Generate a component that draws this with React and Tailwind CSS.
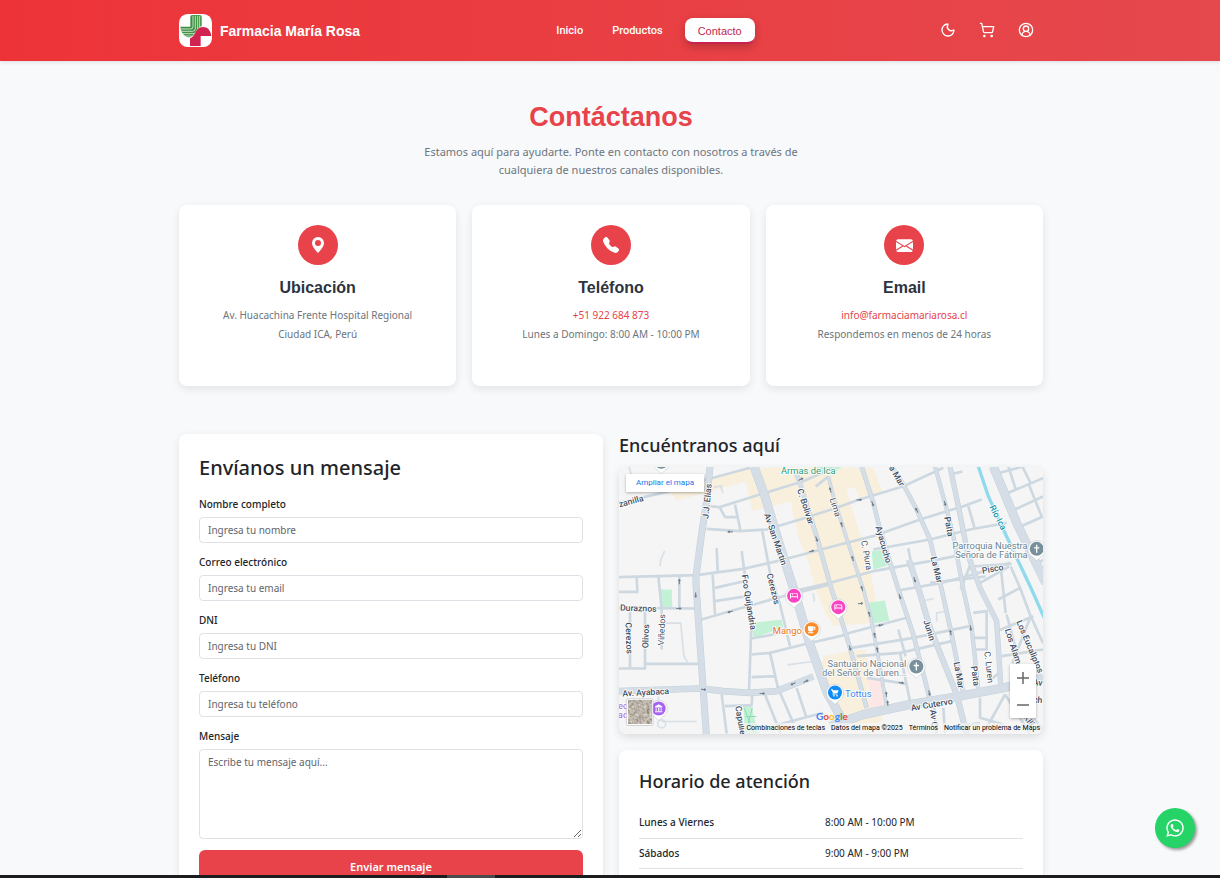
import React from "react";
import { Moon, ShoppingCart, CircleUserRound } from "lucide-react";
import { BsGeoAltFill, BsTelephoneFill, BsEnvelopeFill } from "react-icons/bs";
import { FaWhatsapp } from "react-icons/fa";

function Logo() {
  return (
    <svg viewBox="0 0 99 99" className="size-[33px] shrink-0" aria-hidden="true">
      <rect width="99" height="99" rx="26" fill="#fff" />
      <path d="M34 9q0-6 6-6h22q6 0 6 6v27C50 42 52 60 33 70 18 70 6 58 4 38h30z" fill="#3f9142" />
      <g fill="none" stroke="#e6f3e4" strokeWidth="2.4">
        <path d="M42 5v33q0 7-7 7H4M49 5v38q0 9-9 9H6M56 5v37q0 17-16 17H9M62 5v34M38 66H15" />
      </g>
      <path d="M33 96V73c16-4 15-34 38-34 15 0 24 10 26 27H65v30z" fill="#d1234f" />
    </svg>
  );
}

const minorRoads = [
  "M0 109L153 74L263 39L393 4",
  "M273 119L300 122L423 84L553 44L640 5",
  "M263 187L363 194L443 189L543 159L653 124L713 102L853 59L973 4",
  "M0 332L233 326L373 307L503 277L663 234L763 209L903 159L1033 119L1088 99",
  "M763 249L933 219L1053 189L1163 169",
  "M520 375L633 349L763 314L933 284L1043 262",
  "M838 372L963 350L1060 325L1173 289",
  "M248 459L333 434L493 389L633 354",
  "M398 564L453 559L553 534L663 509L693 499L863 454",
  "M698 544L883 514L1053 479",
  "M713 569L843 559L998 524",
  "M0 424L228 426M0 606H78V426M78 592H240M33 426V606",
  "M118 330L128 426V549M53 332L55 376H0M181 330V426",
  "M368 254L378 329L398 454L390 674M293 244L296 314",
  "M430 194L453 319L483 414L513 539M348 114L365 194M303 124L318 152H358",
  "M281 324L288 444M288 364L372 345M288 404L383 389",
  "M453 559L478 669M398 632L468 629M398 516L493 498",
  "M308 684L323 801M318 719L398 716L400 680M438 684L485 801M484 680L523 770M533 665L563 755M470 776L613 739",
  "M1048 119L1068 189M1003 22L1030 15M1073 355L1170 300M1060 300L1178 292",
  "M1143 19L1213 0M1168 79L1272 35M1185 130L1272 90M1205 180L1272 150M1168 0L1190 68M1210 0L1235 50M1230 55L1268 150M1258 290L1272 280",
  "M1138 399L1203 364L1233 444L1272 530M1133 494L1243 449M1203 364L1175 300M1145 299L1160 440",
  "M1063 439L1103 434V549H1063M1063 514H1100M1148 569L1272 549M1163 444L1203 594M1235 450L1180 590",
  "M973 724L978 801M1083 694V754L1153 774M1158 684L1103 784M1158 684L1233 801M1190 690L1272 790M1083 770L1043 775",
  "M933 349L1100 330M868 245L888 354M1115 640L1145 616M1025 369L1060 280",
  "M843 559L875 714M838 489L860 570M745 634L863 652M953 804L945 720",
  "M628 30L590 60",
];

const arterials = [
  ["M273 0L262 110L246 215L231 330L231 354L245 560L262 804", 21],
  ["M405 0L438 90L480 230L525 370L573 534L625 680L675 770", 27],
  ["M530 20L540 40L593 210L638 370L653 414L693 544L743 724", 14],
  ["M628 30L643 89L668 169L703 279L733 369L753 444L773 544L803 720", 11],
  ["M728 0L763 109L783 189L838 369L883 504L933 700", 14],
  ["M818 0L853 54L893 129L933 219L968 369L998 504L1033 680", 14],
  ["M948 0L978 109L1003 209L1033 369L1058 484L1078 670", 13],
  ["M993 0L1018 119L1048 269L1083 364L1133 464L1145 654", 16],
  ["M870 280L898 364L933 484L1013 684L1043 804", 18],
  ["M1123 0L1193 169L1280 350", 27],
  ["M0 674L243 666L313 674L393 679L473 674L583 630", 20],
  ["M633 780L733 744L873 714L1023 689L1153 664L1272 634", 27],
];

const streetNames = [
  ["zanilla", 36, 104, -15],
  ["J.J. Elias", 264, 104, -84],
  ["Av San Martin", 470, 218, 71],
  ["C. Bolivar", 560, 120, 72],
  ["Lima", 649, 122, 72, 1],
  ["a Mar", 834, 28, 60],
  ["Ayacucho", 794, 234, 74],
  ["C. Piura", 743, 266, 80, 1],
  ["La Mar", 953, 310, 76],
  ["Paita", 990, 180, 80],
  ["Pisco", 1121, 307, -10],
  ["Fco Quijandria", 390, 407, 81],
  ["Cerezos", 463, 367, 76],
  ["Duraznos", 58, 425, 2],
  ["Cerezos", 30, 515, 88],
  ["Olivos", 80, 509, -88],
  ["Viñedos", 128, 490, -88, 1],
  ["Av. Ayabaca", 80, 677, -3],
  ["Capulíes", 366, 768, 80],
  ["Junin", 931, 491, 72],
  ["La Mar", 1020, 626, 80],
  ["Paita", 1069, 628, 82],
  ["C. Luren", 1110, 602, 84, 1],
  ["Los Alamos", 1187, 552, 72],
  ["Los Eucaliptos", 1233, 540, 67],
  ["Av Cutervo", 938, 714, -10],
  ["Av C", 945, 756, 84],
  ["Av", 1256, 648, 5],
  ["ch", 1256, 700, 5],
  ["Kill", 1230, 762, 55],
];

function Pin({ x, y, color, children }) {
  return (
    <g transform={`translate(${x} ${y})`}>
      <path d="M0 36l-11-11a26 26 0 1 1 22 0z" fill="#fff" stroke="#b9c0c6" strokeWidth="1.5" />
      <circle r="21" fill={color} />
      <g fill="#fff" stroke="none">{children}</g>
    </g>
  );
}

const bed = <path d="M-12-8h3v9h18v-3q0-4-4-4h-9v5h-2v-5h-3v-2h17q4 0 4 5v11h-3v-4h-18v4h-3z" />;
const cross = <path d="M-2-12h4v7h6v4h-6v13h-4v-13h-6v-4h6z" />;
const arrows = [
  [333, 196, 180], [181, 345, -90], [593, 218, 70], [578, 254, -15], [546, 38, -25], [634, 70, -105],
  [668, 174, -105], [721, 100, 0], [761, 112, 70], [893, 131, -115], [978, 111, 75], [701, 276, -105],
  [887, 340, 75], [230, 386, 90], [333, 436, 165], [180, 426, 0], [254, 669, 5], [430, 681, 0],
  [522, 652, 155], [561, 644, -25], [725, 411, -5], [729, 366, -105], [843, 391, 75], [751, 443, -105],
  [785, 476, 170], [767, 506, -100], [775, 550, -100], [693, 545, 75], [995, 498, -100], [1055, 485, 85],
  [847, 649, 5], [802, 683, -95], [806, 710, -95], [931, 680, 80],
];

function StreetMap() {
  return (
    <svg viewBox="0 0 1272 804" preserveAspectRatio="xMidYMid slice" className="block size-full" role="img" aria-label="Mapa de Ica" fontFamily="Roboto, sans-serif">
      <defs>
        <filter id="ground" x="0" y="0" width="100%" height="100%">
          <feTurbulence type="fractalNoise" baseFrequency="0.12" numOctaves="4" seed="4" />
          <feColorMatrix values="0.7 0.3 0 0 0  0.65 0.3 0 0 -0.02  0.6 0.3 0 0 -0.05  0 0 0 0 1" />
        </filter>
      </defs>
      <rect width="1272" height="804" fill="#f5f5f5" />
      <g fill="#f8efdc">
        <path d="M155 76L263 40L400 4H763L790 75L720 95L708 60L682 68L700 130L745 270L765 369L780 460L640 470L620 440L590 369L570 290L540 220L515 105L400 133L380 45L273 75L173 102Z" />
        <path d="M633 400L720 390L750 470L640 478ZM613 570L680 555L740 550L760 640L745 660L755 720L790 725V765L640 790L650 730L600 640Z" />
      </g>
      <path d="M748 640h44l9 75-48 10z" fill="#fde6e6" />
      <g fill="#c3f1d5">
        <path d="M758 254L803 249L818 293L763 309ZM748 409L798 402L811 462L761 472ZM398 469L488 459L493 484L403 514ZM121 369H158L160 424H123ZM373 719H398L418 804H378ZM590 0h80l-20 14h-50z" />
      </g>
      <g fill="none" strokeLinejoin="round">
        <g stroke="#cdd8e0" strokeWidth="8">
          {minorRoads.map((d) => <path key={d} d={d} />)}
        </g>
        <g stroke="#d8e0e7" strokeWidth="5">
          <path d="M123 299L125 280L137 253M138 470H185L195 570L208 590M305 60L312 80M505 595L580 585M918 402L945 396M953 465V440L975 435M310 58L285 62M583 380L586 405M30 0L40 35" />
          <path d="M118 745V690M128 765L233 765" />
          <circle cx="128" cy="772" r="12" />
        </g>
        <path d="M375 724l30 76M400 724l-20 76M380 750h32M385 775h32" stroke="#8fdcb2" strokeWidth="3" />
        {arterials.map(([d, w]) => <path key={d} d={d} stroke="#c3d0da" strokeWidth={w} />)}
        {arterials.map(([d, w]) => <path key={d} d={d} stroke="#d5dee6" strokeWidth={w - 3} />)}
        <path d="M1078 0L1108 89L1153 189L1238 369L1276 455" stroke="#90daee" strokeWidth="10" />
      </g>
      <g fill="#6b7885" stroke="#6b7885" strokeWidth="2">
        {arrows.map(([x, y, a]) => (
          <path key={`${x}-${y}`} transform={`translate(${x} ${y}) rotate(${a})`} d="M-8 0H2V-3L7 0L2 3V0z" />
        ))}
      </g>
      <g fill="#3f4f63" stroke="#fff" strokeWidth="5" paintOrder="stroke" strokeLinejoin="round" fontSize="26" textAnchor="middle">
        {streetNames.map(([name, x, y, a, light]) => (
          <text key={name + x} transform={`translate(${x} ${y}) rotate(${a})`} dy="9" fontWeight={light ? 400 : 500}>{name}</text>
        ))}
        <text transform="translate(1137 153) rotate(63)" dy="9" fontWeight="500" fill="#0f97ac">Río Ica</text>
        <g fontWeight="400" fontSize="28">
          <text x="568" y="22" fill="#2d9c72">Armas de Ica</text>
          <text x="1226" y="246" textAnchor="end" fill="#6b8290">Parroquia Nuestra</text>
          <text x="1226" y="274" textAnchor="end" fill="#6b8290">Señora de Fátima</text>
          <text x="862" y="601" textAnchor="end" fill="#6b8290">Santuario Nacional</text>
          <text x="862" y="629" textAnchor="end" fill="#6b8290">del Señor de Luren...</text>
          <text x="505" y="503" fill="#ea7423">Mango</text>
          <text x="718" y="692" fill="#3b86f0">Tottus</text>
          <text x="12" y="728" fill="#a35be8">ec</text>
          <text x="12" y="754" fill="#a35be8">ad</text>
        </g>
      </g>
      <Pin x={127} y={-14} color="#78909c" />
      <Pin x={525} y={388} color="#fb44c4">{bed}</Pin>
      <Pin x={658} y={422} color="#fb44c4">{bed}</Pin>
      <Pin x={578} y={488} color="#fb8c2b"><path d="M-11-9h16v2h6v9h-6q-1 5-5 5h-6q-5 0-5-5zM5-4v4h3v-4zM-11 9h16v3h-16z" /></Pin>
      <Pin x={648} y={678} color="#0d8df5"><path d="M-12-10h5l1 3h17l-4 10h-11l-1 2h12v2h-15l2-5-4-9h-2z" /><circle cx="-3" cy="10" r="2.4" /><circle cx="6" cy="10" r="2.4" /></Pin>
      <Pin x={119} y={726} color="#a762f2"><path d="M0-13L11-6v3h-22v-3zM-9-1h3v8h-3zM-2-1h4v8h-4zM6-1h3v8h-3zM-11 8h22v3h-22z" /></Pin>
      <Pin x={1253} y={247} color="#78909c">{cross}</Pin>
      <Pin x={892} y={600} color="#78909c">{cross}</Pin>
      <rect x="22" y="697" width="80" height="80" rx="5" fill="#fff" stroke="#b9bdc2" strokeWidth="2" />
      <rect x="27" y="702" width="70" height="70" filter="url(#ground)" />
    </svg>
  );
}

function InfoCard({ icon, title, children }) {
  return (
    <article className="flex flex-col items-center rounded-lg bg-white px-4 pt-5 pb-[42px] text-center shadow-[0_3px_9px_rgba(0,0,0,0.09)]">
      <div className="flex size-10 items-center justify-center rounded-full bg-[#e8434a] text-white">{icon}</div>
      <h3 className="mt-[13px] font-['Liberation_Sans',sans-serif] text-base leading-5 font-bold text-[#2b3440]">{title}</h3>
      <div className="mt-2 flex flex-col text-[10px] leading-[19px] text-[#6c757d]">{children}</div>
    </article>
  );
}

const fields = [
  { id: "nombre", label: "Nombre completo", type: "text", hint: "Ingresa tu nombre" },
  { id: "correo", label: "Correo electrónico", type: "email", hint: "Ingresa tu email" },
  { id: "dni", label: "DNI", type: "text", hint: "Ingresa tu DNI" },
  { id: "telefono", label: "Teléfono", type: "tel", hint: "Ingresa tu teléfono" },
];

const inputStyle = "block w-full rounded border border-[#dee2e6] bg-white px-2 text-[10px] text-[#212529] placeholder:text-[#5f666d]";
const labelStyle = "mb-1 block text-[10px] leading-[18px] font-medium text-[#212529]";

function MessageForm() {
  return (
    <form className="rounded-lg bg-white p-5 shadow-[0_3px_9px_rgba(0,0,0,0.09)]" onSubmit={(e) => e.preventDefault()}>
      <h2 className="mb-3.5 text-xl leading-[27px] font-medium">Envíanos un mensaje</h2>
      {fields.map((f) => (
        <div key={f.id} className="mb-2.5">
          <label htmlFor={f.id} className={labelStyle}>{f.label}</label>
          <input id={f.id} type={f.type} placeholder={f.hint} className={`${inputStyle} h-[26px]`} />
        </div>
      ))}
      <label htmlFor="mensaje" className={labelStyle}>Mensaje</label>
      <textarea id="mensaje" placeholder="Escribe tu mensaje aquí..." className={`${inputStyle} mb-[11px] h-[90px] resize-y py-1 leading-4`} />
      <button type="submit" className="h-[34px] w-full rounded-md bg-[#e8434a] text-[11px] font-semibold text-white">Enviar mensaje</button>
    </form>
  );
}

const hours = [
  ["Lunes a Viernes", "8:00 AM - 10:00 PM"],
  ["Sábados", "9:00 AM - 9:00 PM"],
  ["Domingos", "9:00 AM - 8:00 PM"],
];

function MapPanel() {
  return (
    <div className="relative h-[267px] overflow-hidden rounded-lg shadow-[0_3px_9px_rgba(0,0,0,0.12)]">
      <StreetMap />
      <a href="#mapa" className="absolute top-[7px] left-[7px] rounded-[1px] bg-white px-2.5 font-['Roboto',sans-serif] text-[8px] leading-[18px] text-[#1a73e8] shadow-[0_1px_3px_rgba(0,0,0,0.3)]">Ampliar el mapa</a>
      <div className="absolute right-[7px] bottom-4 flex w-[26px] flex-col rounded-[1px] bg-white text-[#666] shadow-[0_1px_3px_rgba(0,0,0,0.3)]">
        <button type="button" aria-label="Acercar" className="flex h-[27px] items-center justify-center">
          <svg viewBox="0 0 12 12" className="size-3" stroke="currentColor" strokeWidth="1.5"><path d="M0 6h12M6 0v12" /></svg>
        </button>
        <button type="button" aria-label="Alejar" className="flex h-[27px] items-center justify-center">
          <svg viewBox="0 0 12 12" className="size-3" stroke="currentColor" strokeWidth="1.5"><path d="M0 6h12" /></svg>
        </button>
      </div>
      <div className="absolute bottom-3 left-[197px] font-['Lato',sans-serif] text-[10px] leading-3 font-bold" aria-label="Google">
        <span className="text-[#4285f4]">G</span><span className="text-[#ea4335]">o</span><span className="text-[#fbbc05]">o</span><span className="text-[#4285f4]">g</span><span className="text-[#34a853]">l</span><span className="text-[#ea4335]">e</span>
      </div>
      <div className="absolute right-0 bottom-0 flex gap-1.5 bg-[#f5f5f5]/70 px-[3px] font-['Roboto',sans-serif] text-[7px] leading-[11px] whitespace-nowrap text-black">
        <button type="button">Combinaciones de teclas</button>
        <span>Datos del mapa ©2025</span>
        <a href="#terminos">Términos</a>
        <a href="#problema">Notificar un problema de Maps</a>
      </div>
    </div>
  );
}

export default function App() {
  return (
    <div className="min-h-screen bg-[#f8f9fb] font-['Noto_Sans','Open_Sans',sans-serif] text-[#212529]">
      <header className="sticky top-0 z-10 bg-linear-to-r from-[#ed3338] to-[#e5484d] shadow-[0_1px_4px_rgba(0,0,0,0.12)]">
        <div className="mx-auto grid h-[61px] max-w-[866px] grid-cols-[1fr_auto_1fr] items-center pl-0.5">
          <a href="#inicio" className="flex items-center gap-2 font-['Liberation_Sans',sans-serif] text-sm font-bold text-white">
            <Logo />
            Farmacia María Rosa
          </a>
          <nav className="flex items-center gap-1 pl-[76px] font-['Roboto',sans-serif] text-[11px] text-white">
            <a href="#inicio" className="px-[13px] pt-0.5 font-medium">Inicio</a>
            <a href="#productos" className="px-3 pt-0.5 font-medium">Productos</a>
            <a href="#contacto" aria-current="page" className="ml-1.5 flex h-[26px] items-center rounded-lg border-b-2 border-[#c8234f] bg-white px-[13px] pt-[3px] font-['Liberation_Sans',sans-serif] text-[#c41e4e] shadow-[0_3px_8px_rgba(0,0,0,0.2)]">Contacto</a>
          </nav>
          <div className="flex items-center justify-end gap-[23px] pr-[9px] pb-0.5 text-white">
            <button type="button" aria-label="Modo oscuro"><Moon size={16} strokeWidth={2} /></button>
            <button type="button" aria-label="Carrito"><ShoppingCart size={16} strokeWidth={2} /></button>
            <button type="button" aria-label="Mi cuenta"><CircleUserRound size={16} strokeWidth={2} /></button>
          </div>
        </div>
      </header>

      <main className="mx-auto max-w-[866px] pb-12 pl-0.5">
        <section className="flex flex-col items-center pt-10 text-center">
          <h1 className="font-['Liberation_Sans',sans-serif] text-[27px] leading-8 font-bold text-[#e8434a]">Contáctanos</h1>
          <p className="mt-2.5 max-w-[400px] text-[11px] leading-[18px] text-[#6c757d]">
            Estamos aquí para ayudarte. Ponte en contacto con nosotros a través de cualquiera de nuestros canales disponibles.
          </p>
        </section>

        <section className="mt-[26px] grid grid-cols-3 gap-4">
          <InfoCard title="Ubicación" icon={<BsGeoAltFill size={16} />}>
            <span>Av. Huacachina Frente Hospital Regional</span>
            <span>Ciudad ICA, Perú</span>
          </InfoCard>
          <InfoCard title="Teléfono" icon={<BsTelephoneFill size={16} />}>
            <a href="tel:+51922684873" className="text-[#e8434a]">+51 922 684 873</a>
            <span>Lunes a Domingo: 8:00 AM - 10:00 PM</span>
          </InfoCard>
          <InfoCard title="Email" icon={<BsEnvelopeFill size={17} />}>
            <a href="mailto:info@farmaciamariarosa.cl" className="text-[#e8434a]">info@farmaciamariarosa.cl</a>
            <span>Respondemos en menos de 24 horas</span>
          </InfoCard>
        </section>

        <section className="mt-12 grid grid-cols-2 items-start gap-4">
          <MessageForm />
          <div className="flex flex-col">
            <h2 className="mb-[11px] text-lg leading-[22px] font-medium">Encuéntranos aquí</h2>
            <MapPanel />
            <div className="mt-4 rounded-lg bg-white p-5 shadow-[0_3px_9px_rgba(0,0,0,0.09)]">
              <h2 className="mb-[15px] text-lg leading-[23px] font-medium">Horario de atención</h2>
              <table className="w-full text-left text-[10px]">
                <tbody>
                  {hours.map(([day, time]) => (
                    <tr key={day} className="h-[30px] border-b border-[#dee2e6]">
                      <th scope="row" className="w-[186px] font-medium">{day}</th>
                      <td>{time}</td>
                    </tr>
                  ))}
                </tbody>
              </table>
            </div>
          </div>
        </section>
      </main>

      <a href="#whatsapp" aria-label="WhatsApp" className="fixed right-[25px] bottom-[30px] flex size-10 items-center justify-center rounded-full bg-[#25d366] text-white shadow-[2px_2px_3px_#999]">
        <FaWhatsapp size={20} />
      </a>
      <div className="fixed inset-x-0 bottom-0 z-20 flex h-[3px] bg-[#1c1c1e] pl-[447px]">
        <div className="w-12 bg-[#4b4b4d]" />
      </div>
    </div>
  );
}
